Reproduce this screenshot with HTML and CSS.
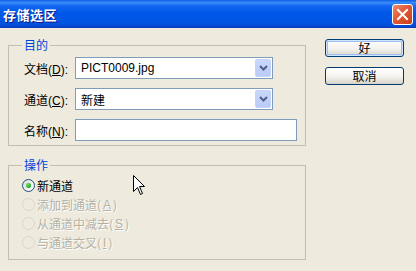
FILE: index.html
```html
<!DOCTYPE html>
<html lang="zh-CN">

<head>
    <meta charset="UTF-8">
    <title>存储选区</title>
    <link rel="stylesheet" href="styles.css">
</head>

<body>
    <div class="window">
        <div class="titlebar">
            <span class="title">存储选区</span>
            <span class="close">
                <svg width="19" height="19" viewBox="0 0 19 19">
                    <path d="M5 5 L14 14 M14 5 L5 14" stroke="#fff" stroke-width="2" stroke-linecap="square" />
                </svg>
            </span>
        </div>

        <div class="content">
            <div class="main">
                <fieldset class="group dest">
                    <legend>目的</legend>
                    <div class="row">
                        <label>文档(<u>D</u>):</label>
                        <div class="combo">
                            <span class="value">PICT0009.jpg</span>
                            <span class="drop">
                                <svg width="9" height="6" viewBox="0 0 9 6">
                                    <path d="M1 1 L4.5 4.5 L8 1" fill="none" stroke="#4D6185" stroke-width="2" />
                                </svg>
                            </span>
                        </div>
                    </div>
                    <div class="row">
                        <label>通道(<u>C</u>):</label>
                        <div class="combo">
                            <span class="value">新建</span>
                            <span class="drop">
                                <svg width="9" height="6" viewBox="0 0 9 6">
                                    <path d="M1 1 L4.5 4.5 L8 1" fill="none" stroke="#4D6185" stroke-width="2" />
                                </svg>
                            </span>
                        </div>
                    </div>
                    <div class="row">
                        <label>名称(<u>N</u>):</label>
                        <input class="field" type="text">
                    </div>
                </fieldset>

                <fieldset class="group ops">
                    <legend>操作</legend>
                    <div class="radio checked"><span class="circle"></span>新通道</div>
                    <div class="radio disabled"><span class="circle"></span>添加到通道(<u>A</u>)</div>
                    <div class="radio disabled"><span class="circle"></span>从通道中减去(<u>S</u>)</div>
                    <div class="radio disabled"><span class="circle"></span>与通道交叉(<u>I</u>)</div>
                </fieldset>
            </div>

            <div class="buttons">
                <button class="btn default">好</button>
                <button class="btn">取消</button>
            </div>
        </div>

        <!-- mouse pointer -->
        <svg class="cursor" width="13" height="21" viewBox="0 0 13 21">
            <path d="M0.5 0.5 L0.5 16.5 L4.5 12.5 L7.5 19.5 L9.5 18.5 L6.5 11.5 L11.5 11.5 Z" fill="#fff" stroke="#000" stroke-width="1" />
        </svg>
    </div>
</body>

</html>
```

FILE: styles.css
```css
body {
    margin: 0;
    padding: 0;
    background-color: #eeeade;
    font-family: "Liberation Sans", "Noto Sans CJK SC", sans-serif;
    font-size: 12px;
    color: #000;
}

.window {
    position: relative;
    width: 416px;
    height: 271px;
    overflow: hidden;
}

.titlebar {
    height: 28px;
    box-sizing: border-box;
    display: flex;
    align-items: center;
    justify-content: space-between;
    padding: 1px 3px 0 3px;
    background: linear-gradient(to bottom, #0a5ee0 0%, #3b8cfb 10%, #1166f0 22%, #0057e8 50%, #0055e2 82%, #0046d0 100%);
    border-bottom: 1px solid #0a3cb6;
}

.title {
    color: #fff;
    font-family: "Noto Sans CJK SC", sans-serif;
    font-weight: bold;
    font-size: 13px;
    letter-spacing: 0.5px;
    text-shadow: 1px 1px 0 #0b1a8a;
}

.close {
    width: 21px;
    height: 21px;
    box-sizing: border-box;
    border: 1px solid #fff;
    border-radius: 3px;
    background: linear-gradient(135deg, #ef8a6c 0%, #e05a36 45%, #c73d17 100%);
    display: flex;
    align-items: center;
    justify-content: center;
}

.content {
    display: flex;
    padding: 9px 0 0 8px;
}

.main {
    width: 298px;
}

.group {
    margin: 0;
    padding: 4px 0 4px 0;
    border: 1px solid #c3bfb0;
    min-width: 0;
}

.group legend {
    margin-left: 13px;
    padding: 0 2px;
    color: #0046d5;
    line-height: 16px;
    font-family: "Noto Sans CJK SC", sans-serif;
}

.row {
    display: flex;
    align-items: center;
    height: 22px;
    padding-left: 15px;
    margin-bottom: 9px;
}

.row:last-child {
    margin-bottom: 0;
}

.row label {
    width: 51px;
    white-space: nowrap;
}

.combo {
    width: 198px;
    height: 22px;
    box-sizing: border-box;
    border: 1px solid #7f9db9;
    background: #fff;
    display: flex;
    align-items: center;
    justify-content: space-between;
    padding: 1px 1px 1px 5px;
}

.drop {
    width: 16px;
    height: 18px;
    box-sizing: border-box;
    border: 1px solid #c3d3fd;
    border-radius: 2px;
    background: linear-gradient(to bottom, #c9d8fc 0%, #b9cbf6 100%);
    display: flex;
    align-items: center;
    justify-content: center;
}

.field {
    width: 222px;
    height: 22px;
    box-sizing: border-box;
    border: 1px solid #7f9db9;
    background: #fff;
    margin: 0;
    padding: 0 4px;
    outline: none;
}

.ops {
    margin-top: 11px;
    padding: 3px 0 7px 0;
}

.radio {
    display: flex;
    align-items: center;
    gap: 2px;
    height: 19px;
    padding-left: 13px;
    font-family: "Noto Sans CJK SC", sans-serif;
    white-space: nowrap;
}

.radio u {
    font-family: "Liberation Sans", sans-serif;
}

.circle {
    width: 13px;
    height: 13px;
    box-sizing: border-box;
    border-radius: 50%;
    display: flex;
    align-items: center;
    justify-content: center;
}

.checked .circle {
    border: 1px solid #1c5180;
    background: linear-gradient(135deg, #dcdcd6 0%, #ffffff 100%);
}

.checked .circle::after {
    content: "";
    width: 5px;
    height: 5px;
    border-radius: 50%;
    background: radial-gradient(circle at 35% 35%, #6fe06f 0%, #21a121 70%);
}

.disabled {
    color: #b5b1a2;
    text-shadow: 1px 1px 0 #fff;
}

.disabled .circle {
    border: 1px solid #d9d6ca;
}

.buttons {
    display: flex;
    flex-direction: column;
    gap: 10px;
    margin-left: 19px;
    padding-top: 2px;
}

.btn {
    width: 79px;
    height: 18px;
    box-sizing: border-box;
    border: 1px solid #003c74;
    border-radius: 3px;
    background: linear-gradient(to bottom, #ffffff 0%, #f3f2ee 55%, #d8d3c8 100%);
    font-family: "Noto Sans CJK SC", sans-serif;
    font-size: 12px;
    line-height: 14px;
    padding: 0;
    color: #000;
}

.btn.default {
    box-shadow: inset 0 0 0 1px #cee7ff, inset 0 0 0 2px #9fbdf0;
}

.cursor {
    position: absolute;
    left: 133px;
    top: 175px;
}
```
